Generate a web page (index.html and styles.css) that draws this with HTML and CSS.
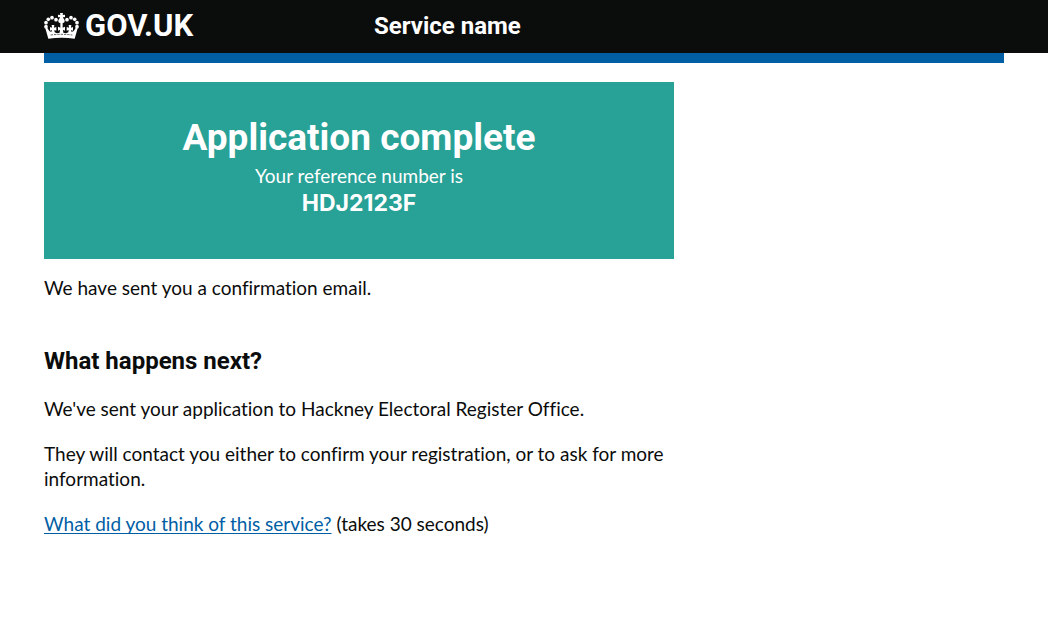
FILE: index.html
```html
<!DOCTYPE html>
<html lang="en">
<head>
<meta charset="utf-8">
<meta name="viewport" content="width=device-width, initial-scale=1">
<title>Application complete - GOV.UK</title>
<link rel="stylesheet" href="styles.css">
</head>
<body>
<header class="header">
  <div class="container header-grid">
    <a class="logo" href="#">
      <svg class="crown" viewBox="0 0 105 78" aria-hidden="true">
        <g fill="currentColor">
          <path d="M48 0h9l-1 6 7-1v8l-6-1 2 5c5 4 4 11-1 13h-11c-5-2-6-9-1-13l2-5-6 1V5l7 1z"/>
          <circle cx="36" cy="20" r="5.5"/><circle cx="24" cy="14" r="5.5"/><circle cx="13" cy="19" r="5.5"/><circle cx="6" cy="29" r="5.5"/><circle cx="6" cy="41" r="5.5"/>
          <circle cx="69" cy="20" r="5.5"/><circle cx="81" cy="14" r="5.5"/><circle cx="92" cy="19" r="5.5"/><circle cx="99" cy="29" r="5.5"/><circle cx="99" cy="41" r="5.5"/>
          <path d="M49 28h7v16l7-3v12l-6-3 1 9 8 2 7-3 1-7-6 2V42l7 2-1-8h8l-1 8 6-2v11l-6-2 2 6 6-3 8-12 4 4-9 31q-39-5-79 0L4 46l4-4 8 12 6 3 2-6-6 2V42l6 2-1-8h8l-1 8 7-2v11l-6-2 1 7 7 3 8-2 1-9-6 3V41l7 3z"/>
        </g>
        <path d="M20 66q32-4 65 0" fill="none" stroke="#0b0c0c" stroke-width="2" stroke-dasharray="7 3"/>
      </svg>
      <span>GOV.UK</span>
    </a>
    <a class="service-name" href="#">Service name</a>
  </div>
</header>
<div class="container">
  <div class="blue-bar"></div>
  <div class="page-grid">
    <main>
      <section class="panel">
        <h1>Application complete</h1>
        <p>Your reference number is</p>
        <strong>HDJ2123F</strong>
      </section>
      <p>We have sent you a confirmation email.</p>
      <h2>What happens next?</h2>
      <p>We've sent your application to Hackney Electoral Register Office.</p>
      <p>They will contact you either to confirm your registration, or to ask for more information.</p>
      <p><a class="link" href="#">What did you think of this service?</a> (takes 30 seconds)</p>
    </main>
  </div>
</div>
</body>
</html>
```
FILE: styles.css
```css
* { box-sizing: border-box; }
body {
  margin: 0;
  background: #fff;
  color: #0b0c0c;
  font-family: Lato, "Noto Sans", Arial, sans-serif;
  font-size: 19px;
  font-variant-ligatures: none;
  line-height: 25px;
}
h1, h2, .logo, .service-name { font-family: Roboto, Arial, sans-serif; font-weight: 700; }
.container { max-width: 960px; width: calc(100% - 60px); margin: 0 auto; }
.header { background: #0b0c0c; color: #fff; }
.header a { color: inherit; text-decoration: none; }
.header-grid {
  display: grid;
  grid-template-columns: 1fr 2fr;
  gap: 15px;
  align-items: center;
  padding: 11px 0 12px;
}
.logo {
  display: flex;
  align-items: center;
  gap: 6px;
  font-size: 31px;
  line-height: 30px;
}
.crown { width: 35px; height: 26px; flex: none; }
.service-name { font-size: 24px; line-height: 30px; }
.blue-bar { height: 10px; background: #005ea5; }
.page-grid {
  display: grid;
  grid-template-columns: 2fr 1fr;
  gap: 15px;
  padding: 19px 0 60px;
}
.page-grid p { margin: 0 0 20px; }
.panel {
  margin-bottom: 16px;
  padding: 36px 30px 41px;
  background: #28a197;
  color: #fff;
  text-align: center;
}
.panel h1 { margin: 0 0 5px; font-size: 37px; line-height: 40px; }
.page-grid .panel p { margin: 0; }
.panel strong { display: block; font-family: Inter, Arial, sans-serif; font-size: 23px; line-height: 30px; }
h2 { margin: 46px 0 20px; font-size: 24px; line-height: 30px; }
.link { color: #005ea5; text-decoration: underline; text-decoration-thickness: 1px; text-underline-offset: 2px; text-decoration-skip-ink: none; }
```
